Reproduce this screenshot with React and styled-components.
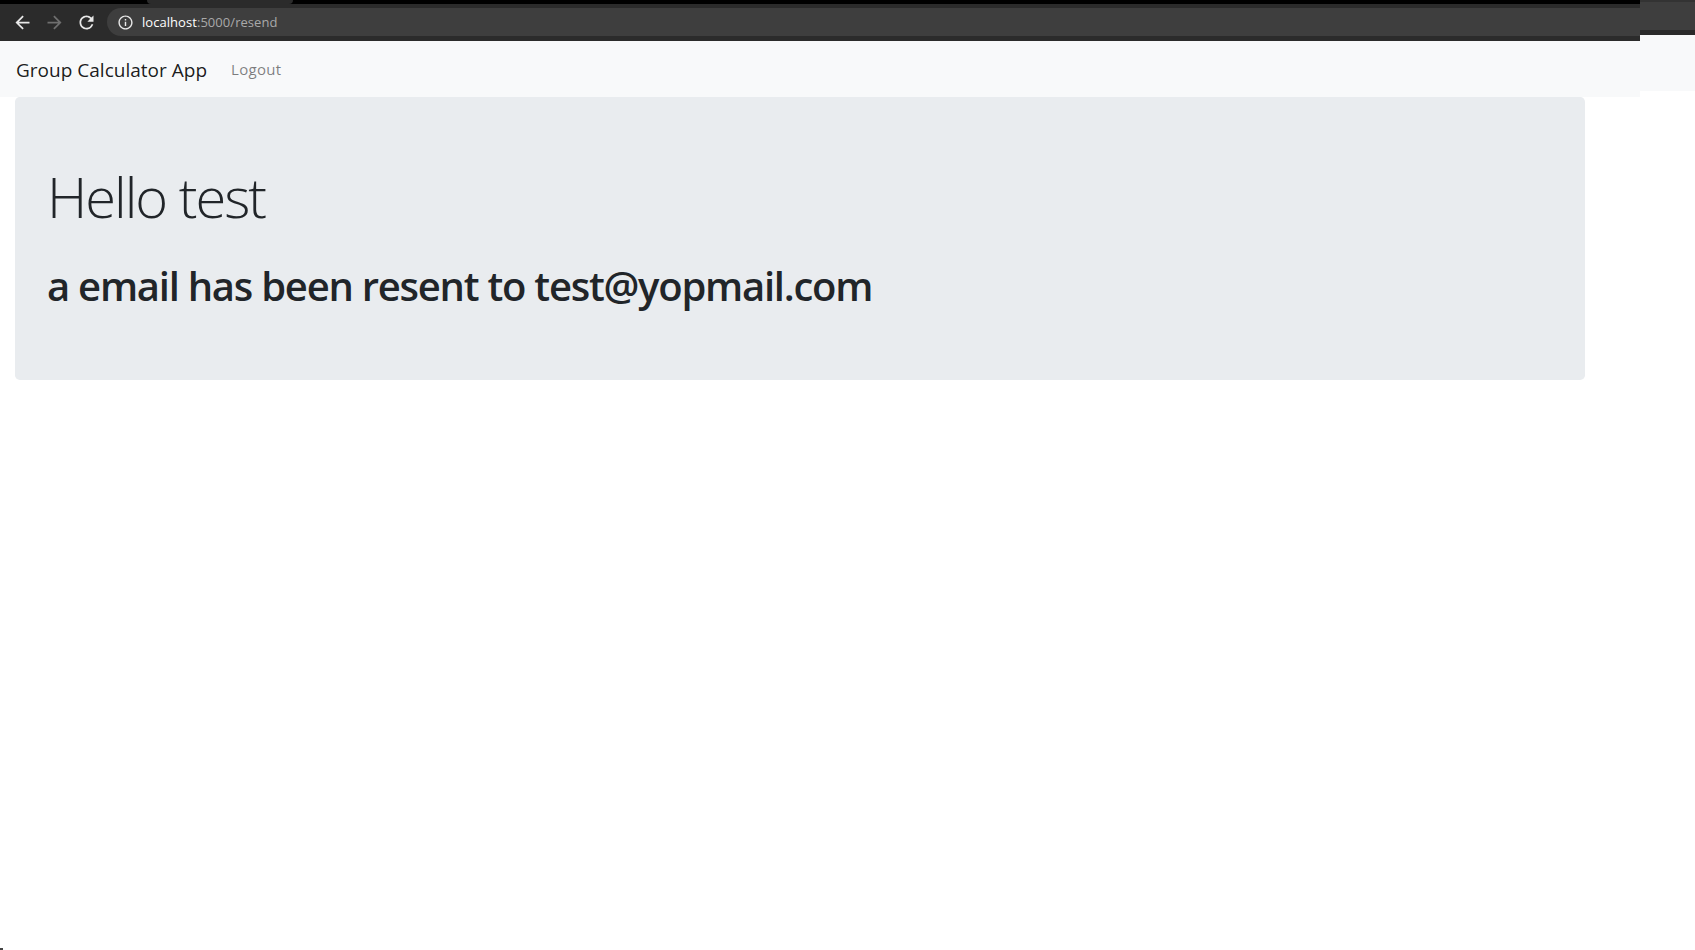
import styled, { createGlobalStyle } from 'styled-components';
import { MdArrowBack, MdArrowForward, MdRefresh, MdInfoOutline } from 'react-icons/md';

const GlobalStyle = createGlobalStyle`
    html, body {
        margin: 0;
        padding: 0;
        background: #fff;
    }
    body {
        font-family: "Open Sans", "Noto Sans", "Liberation Sans", sans-serif;
        color: #212529;
    }
`;

const App = () => {
    return (
        <Page>
            <GlobalStyle />
            <Main>
                <BrowserChrome>
                    <TabStrip>
                        <ActiveTab />
                    </TabStrip>
                    <Toolbar>
                        <NavIcon><MdArrowBack /></NavIcon>
                        <NavIcon $disabled><MdArrowForward /></NavIcon>
                        <NavIcon><MdRefresh /></NavIcon>
                        <AddressBar>
                            <InfoIcon />
                            <Url><strong>localhost</strong>:5000/resend</Url>
                        </AddressBar>
                    </Toolbar>
                </BrowserChrome>
                <Navbar>
                    <Brand>Group Calculator App</Brand>
                    <NavLink>Logout</NavLink>
                </Navbar>
                <Jumbotron>
                    <Title>Hello test</Title>
                    <Message>a email has been resent to test@yopmail.com</Message>
                </Jumbotron>
            </Main>
            <SideStrip>
                <StripChrome />
                <StripNavbar />
            </SideStrip>
            <CornerMark />
        </Page>
    );
};

const Page = styled.div`
    position: relative;
    display: grid;
    grid-template-columns: 1640px 55px;
    width: 1695px;
    height: 950px;
    overflow: hidden;
`;

const Main = styled.div`
    display: flex;
    flex-direction: column;
`;

const BrowserChrome = styled.div`
    height: 41px;
    background: #2b2b2b;
`;

const TabStrip = styled.div`
    height: 4px;
    background: #000;
`;

const ActiveTab = styled.div`
    width: 146px;
    height: 4px;
    margin-left: 147px;
    background: #2b2b2b;
    border-radius: 0 0 5px 5px;
`;

const Toolbar = styled.div`
    display: flex;
    align-items: center;
    height: 28px;
    margin-top: 4px;
    padding-left: 0.5px;
`;

const NavIcon = styled.span`
    display: flex;
    justify-content: center;
    width: 21px;
    margin-left: 11px;
    font-size: 21px;
    color: ${(props) => (props.$disabled ? '#6f6f6f' : '#e8e8e8')};
`;

const AddressBar = styled.div`
    display: flex;
    align-items: center;
    flex: 1;
    height: 28px;
    margin-left: 10.5px;
    padding-left: 10px;
    background: #3e3e3e;
    border-radius: 14px 0 0 14px;
`;

const InfoIcon = styled(MdInfoOutline)`
    font-size: 17px;
    color: #e8e8e8;
`;

const Url = styled.span`
    margin-left: 8px;
    font-size: 13px;
    letter-spacing: 0.05px;
    color: #a9a9a9;
    strong {
        font-weight: 400;
        color: #fff;
    }
`;

const Navbar = styled.nav`
    display: flex;
    align-items: center;
    height: 56px;
    padding: 0 16px;
    background: #f8f9fa;
`;

const Brand = styled.a`
    padding-top: 2px;
    font-size: 19px;
    letter-spacing: 0.01px;
    color: rgba(0, 0, 0, 0.9);
`;

const NavLink = styled.a`
    margin-left: 24px;
    font-size: 15px;
    letter-spacing: 0.3px;
    color: rgba(0, 0, 0, 0.5);
`;

const Jumbotron = styled.div`
    width: 1570px;
    height: 283px;
    box-sizing: border-box;
    margin-left: 15px;
    padding: 66px 32px 0;
    background: #e9ecef;
    border-radius: 4.8px;
`;

const Title = styled.h1`
    margin: 0 0 32px;
    font-size: 56px;
    font-weight: 300;
    line-height: 67px;
    letter-spacing: -2px;
`;

const Message = styled.h2`
    margin: 0;
    font-size: 40px;
    font-weight: 600;
    line-height: 48px;
    letter-spacing: -1.25px;
`;

const SideStrip = styled.div`
    display: flex;
    flex-direction: column;
`;

const StripChrome = styled.div`
    height: 35px;
    box-sizing: border-box;
    background: #3e3e3e;
    border-top: 2px solid #333;
    border-bottom: 5px solid #2a2a2a;
`;

const StripNavbar = styled.div`
    height: 56px;
    background: #f8f9fa;
`;

const CornerMark = styled.div`
    position: absolute;
    left: 0;
    bottom: 0;
    width: 3px;
    height: 2px;
    background: #444;
`;

export default App;
